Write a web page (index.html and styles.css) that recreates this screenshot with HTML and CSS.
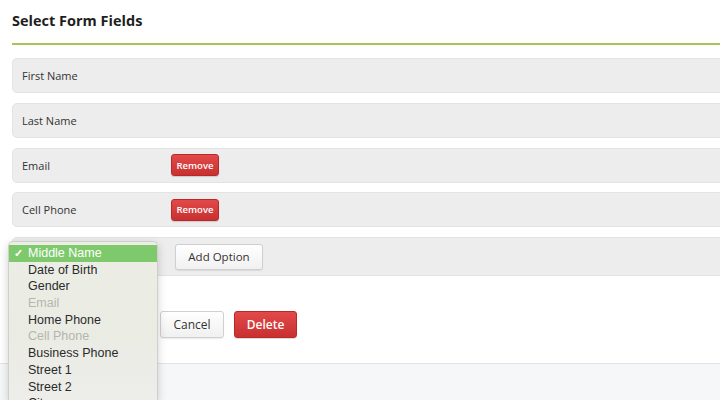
FILE: index.html
```html
<!DOCTYPE html>
<html>
<head>
<meta charset="utf-8">
<link rel="stylesheet" href="styles.css">
</head>
<body>
<div class="page">
  <h1 class="title">Select Form Fields</h1>
  <div class="rule"></div>
  <div class="rows">
    <div class="row"><span class="label">First Name</span></div>
    <div class="row"><span class="label">Last Name</span></div>
    <div class="row"><span class="label">Email</span><button class="btn-remove">Remove</button></div>
    <div class="row"><span class="label">Cell Phone</span><button class="btn-remove">Remove</button></div>
    <div class="row row-add">
      <div class="select-wrap">
        <div class="select-closed"></div>
        <ul class="menu">
          <li class="item selected"><span class="check">✓</span>Middle Name</li>
          <li class="item">Date of Birth</li>
          <li class="item">Gender</li>
          <li class="item disabled">Email</li>
          <li class="item">Home Phone</li>
          <li class="item disabled">Cell Phone</li>
          <li class="item">Business Phone</li>
          <li class="item">Street 1</li>
          <li class="item">Street 2</li>
          <li class="item">City</li>
        </ul>
      </div>
      <button class="btn-add">Add Option</button>
    </div>
  </div>
  <div class="actions">
    <button class="btn-cancel">Cancel</button>
    <button class="btn-delete">Delete</button>
  </div>
</div>
<div class="footer"></div>
</body>
</html>
```
FILE: styles.css
```css
html, body {
  margin: 0;
  padding: 0;
  background: #ffffff;
  overflow: hidden;
  width: 720px;
  height: 400px;
}
body {
  font-family: "Open Sans", "Liberation Sans", sans-serif;
  color: #333;
}
.page {
  padding: 12px 0 0 12px;
  height: 363px;
  box-sizing: border-box;
  position: relative;
  z-index: 2;
}
.title {
  margin: 0;
  font-family: "Open Sans", sans-serif;
  font-weight: 700;
  font-size: 14.5px;
  line-height: 18px;
  color: #1e1e1e;
}
.rule {
  height: 2px;
  background: #a5c654;
  margin-top: 13px;
  margin-right: -20px;
}
.rows {
  margin-top: 13px;
  margin-right: -20px;
  display: flex;
  flex-direction: column;
  gap: 9.75px;
}
.row {
  height: 33px;
  background: #ededed;
  border: 1px solid #e3e3e3;
  border-radius: 5px;
  display: flex;
  align-items: center;
  padding-left: 9px;
}
.label {
  font-size: 11px;
  width: 149px;
  color: #333;
}
.btn-remove {
  font-family: "Open Sans", sans-serif;
  font-size: 9.5px;
  font-weight: 600;
  color: #fff;
  height: 22px;
  width: 48px;
  padding: 0;
  border: 1px solid #b8292b;
  border-radius: 3px;
  background: linear-gradient(#e24a4a, #c93131);
  box-shadow: 0 1px 1px rgba(0,0,0,0.15);
}
.row-add {
  height: 37px;
  padding-left: 0;
}
.select-wrap {
  position: relative;
  width: 162px;
  height: 100%;
}
.select-closed {
  position: absolute;
  left: 0;
  top: 4px;
  width: 146px;
  height: 24px;
}
.menu {
  position: absolute;
  left: -5px;
  top: 3px;
  width: 150px;
  height: 160px;
  overflow: hidden;
  margin: 0;
  padding: 3px 0 0;
  list-style: none;
  background: linear-gradient(#eceee6, #eaece4 60%, #ededea);
  border: 1px solid #cfcfcc;
  border-bottom: none;
  border-radius: 5px 5px 0 0;
  box-shadow: 0 3px 10px rgba(0,0,0,0.18);
  z-index: 5;
  font-family: "Liberation Sans", Arial, sans-serif;
  font-size: 12.5px;
  box-sizing: border-box;
}
.item {
  height: 16.7px;
  line-height: 16.7px;
  padding-left: 19px;
  color: #2a2a2a;
  position: relative;
  white-space: nowrap;
}
.item.selected {
  background: #7ec96b;
  color: #fff;
}
.item.disabled {
  color: #b4b6ae;
}
.check {
  position: absolute;
  left: 5px;
  top: 0;
  font-size: 11px;
  font-weight: 700;
}
.btn-add {
  font-family: "Open Sans", sans-serif;
  font-size: 11.5px;
  color: #333;
  height: 26px;
  width: 88px;
  padding: 0;
  border: 1px solid #cfcfcf;
  border-radius: 3px;
  background: linear-gradient(#ffffff, #f1f1f1);
  box-shadow: 0 1px 1px rgba(0,0,0,0.08);
}
.actions {
  display: flex;
  gap: 10px;
  margin-top: 35px;
  padding-left: 148px;
}
.btn-cancel {
  font-family: "Open Sans", sans-serif;
  font-size: 12px;
  color: #333;
  height: 27px;
  width: 64px;
  padding: 0;
  border: 1px solid #d0d0d0;
  border-radius: 3px;
  background: linear-gradient(#ffffff, #f0f0f0);
  box-shadow: 0 1px 1px rgba(0,0,0,0.08);
}
.btn-delete {
  font-family: "Open Sans", sans-serif;
  font-size: 12px;
  font-weight: 600;
  color: #fff;
  height: 27px;
  width: 63px;
  padding: 0;
  border: 1px solid #b8292b;
  border-radius: 3px;
  background: linear-gradient(#e24a4a, #c93131);
  box-shadow: 0 1px 1px rgba(0,0,0,0.15);
}
.footer {
  height: 37px;
  background: #f6f7f9;
  border-top: 1px solid #e2e3e5;
}
```
